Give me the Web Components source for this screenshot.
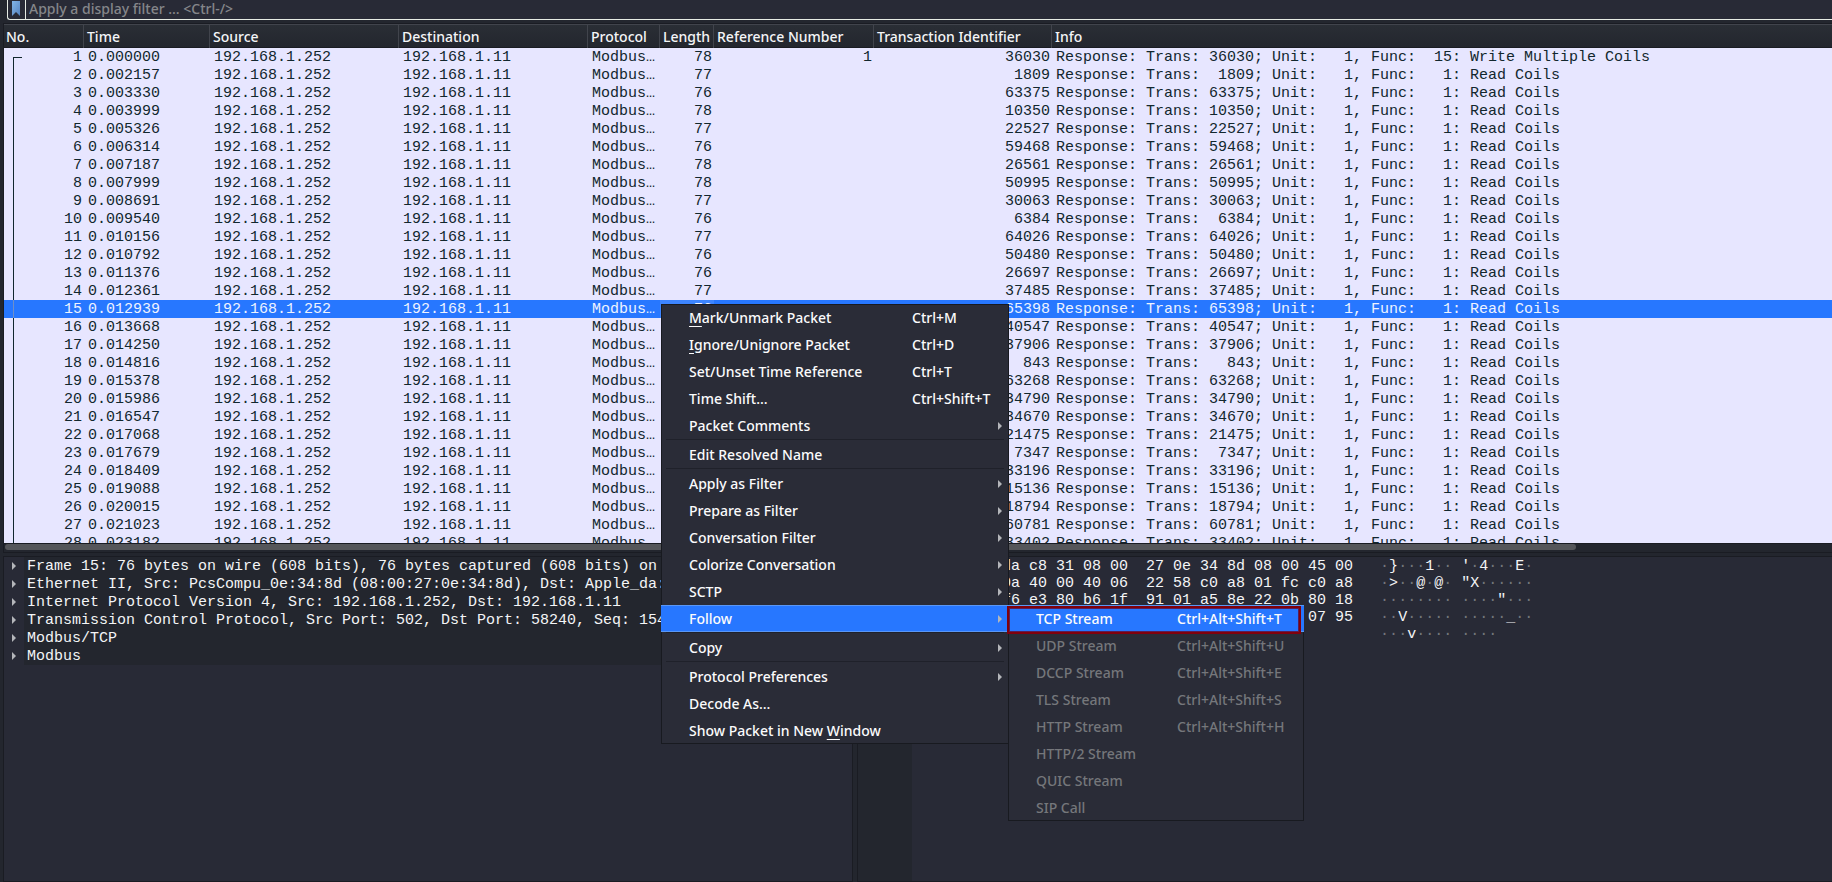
<!DOCTYPE html>
<html lang="en">
<head>
<meta charset="utf-8">
<title>Packet capture</title>
<style>
  html, body { margin: 0; height: 100%; }
  body {
    background: #23262e;
    color: #f4f5f7;
    font: 500 14px/18px "Noto Sans", sans-serif;
    overflow: hidden;
    --mono: 15px/16px "Liberation Mono", monospace;
    --panel: #282a36;
    --shade: #23262e;
    --line: #1a1c23;
    --accent: #2777ff;
  }
</style>
</head>
<body>
<capture-window></capture-window>

<script>
const PACKETS = [
  ['0.000000', 78, 36030, 15, 'Write Multiple Coils', 1],
  ['0.002157', 77, 1809], ['0.003330', 76, 63375], ['0.003999', 78, 10350],
  ['0.005326', 77, 22527], ['0.006314', 76, 59468], ['0.007187', 78, 26561],
  ['0.007999', 78, 50995], ['0.008691', 77, 30063], ['0.009540', 76, 6384],
  ['0.010156', 77, 64026], ['0.010792', 76, 50480], ['0.011376', 76, 26697],
  ['0.012361', 77, 37485], ['0.012939', 76, 65398], ['0.013668', 76, 40547],
  ['0.014250', 76, 37906], ['0.014816', 76, 843], ['0.015378', 76, 63268],
  ['0.015986', 76, 34790], ['0.016547', 76, 34670], ['0.017068', 76, 21475],
  ['0.017679', 76, 7347], ['0.018409', 76, 33196], ['0.019088', 76, 15136],
  ['0.020015', 76, 18794], ['0.021023', 76, 60781], ['0.023182', 76, 33402]
];
const SELECTED = 15;

function define(name, html, setup) {
  const template = document.createElement('template');
  template.innerHTML = html;
  customElements.define(name, class extends HTMLElement {
    constructor() {
      super();
      this.attachShadow({ mode: 'open' }).append(template.content.cloneNode(true));
    }
    connectedCallback() {
      if (setup && !this.ready) { this.ready = true; setup(this, this.shadowRoot); }
    }
  });
}

define('filter-bar', `
  <style>
    :host { display: block; padding-left: 7px; background: var(--shade); }
    .field { display: flex; height: 19px; border: solid #e6ebe4; border-width: 0 0 1px 1px; border-bottom-left-radius: 3px; background: var(--panel); overflow: hidden; }
    button { width: 18px; padding: 0 0 0 4px; border: 0; border-right: 1px solid #e6ebe4; background: none; text-align: left; }
    svg { display: block; margin-bottom: 3px; }
    input { flex: 1; min-width: 0; padding: 0 3px 2px; border: 0; outline: 0; background: none; color: inherit; font: inherit; }
    input::placeholder { color: #85868a; opacity: 1; }
  </style>
  <div class="field">
    <button type="button" aria-label="Filter bookmarks">
      <svg width="9" height="15" viewBox="0 0 9 15"><defs><linearGradient id="g" x2="1" y2="1"><stop stop-color="#82b4e6"/><stop offset="1" stop-color="#5583c0"/></linearGradient></defs><path d="M0 0h8v15L4 11 0 15z" fill="url(#g)"/></svg>
    </button>
    <input type="text" aria-label="Display filter" placeholder="Apply a display filter … &lt;Ctrl-/&gt;">
  </div>`);

define('packet-list', `
  <style>
    :host { display: flex; flex-direction: column; min-height: 0; overflow: hidden; background: var(--shade); border: solid var(--line); border-width: 1px 0 1px 1px; }
    .view { flex: 1; min-height: 0; overflow: hidden; background: #e7e6ff; border-bottom: 1px solid var(--line); }
    table { width: 100%; table-layout: fixed; border-collapse: separate; border-spacing: 0; }
    th { height: 23px; box-sizing: content-box; padding: 0 0 0 3px; border: solid #41444c; border-width: 1px 1px 0 0; background: linear-gradient(#2a2e35, #23262e); box-shadow: inset 0 -1px var(--line); font-weight: inherit; text-align: left; line-height: 23px; white-space: nowrap; }
    th:first-child { padding-left: 2px; }
    th:last-child { border-right: 0; }
    td { height: 16px; padding: 2px 2px 0 4px; font: var(--mono); color: #12272e; white-space: pre; overflow: hidden; }
    .n { text-align: right; }
    td:first-child { background: linear-gradient(#12272e, #12272e) 9px 0 / 1px 100% no-repeat; }
    tr:first-child td:first-child { background: linear-gradient(#12272e, #12272e) 9px 9px / 1px 100% no-repeat, linear-gradient(#12272e, #12272e) 9px 9px / 9px 1px no-repeat; }
    .selected { background: var(--accent); }
    .selected td { color: #eef3ff; }
    .selected td:first-child { background: linear-gradient(#6f8fc8, #6f8fc8) 9px 0 / 1px 100% no-repeat; }
    .selected td:nth-child(6) { background: #3d85ff; }
    .bar { height: 8px; box-sizing: border-box; padding: 0 0 1px 1px; }
    .thumb { width: 86%; height: 6px; border-radius: 3px; background: #55565a; }
  </style>
  <div class="view"><table>
    <colgroup><col style="width:80px"><col style="width:126px"><col style="width:189px"><col style="width:189px"><col style="width:72px"><col style="width:54px"><col style="width:160px"><col style="width:178px"><col></colgroup>
    <thead><tr><th>No.</th><th>Time</th><th>Source</th><th>Destination</th><th>Protocol</th><th>Length</th><th>Reference Number</th><th>Transaction Identifier</th><th>Info</th></tr></thead>
    <tbody></tbody>
  </table></div>
  <div class="bar"><div class="thumb"></div></div>`,
  (host, root) => {
    const body = root.querySelector('tbody');
    PACKETS.forEach(([time, length, trans, func = 1, name = 'Read Coils', ref = ''], i) => {
      const row = body.insertRow();
      if (i + 1 === SELECTED) row.className = 'selected';
      const info = `Response: Trans: ${String(trans).padStart(5)}; Unit:   1, Func: ${String(func).padStart(3)}: ${name}`;
      [i + 1, time, '192.168.1.252', '192.168.1.11', 'Modbus…', length, ref, trans, info].forEach((value, column) => {
        const cell = row.insertCell();
        cell.textContent = value;
        if ([0, 5, 6, 7].includes(column)) cell.className = 'n';
      });
    });
  });

define('protocol-node', `
  <style>
    :host { display: block; }
    button { display: grid; grid-template-columns: 20px 1fr; align-items: center; width: 100%; height: 18px; padding: 0; border: 0; background: none; color: #f4f5f7; font: var(--mono); text-align: left; white-space: pre; }
    svg { display: block; margin-left: 8px; }
    span { padding: 2px 0 0 3px; background: var(--shade); overflow: hidden; }
  </style>
  <button type="button" aria-expanded="false">
    <svg width="5" height="8" viewBox="0 0 5 8"><path d="M0 0L4 4 0 8z" fill="#b4b6ba"/></svg><span><slot></slot></span>
  </button>`);

define('packet-details', `
  <style>
    :host { display: block; min-width: 0; overflow: hidden; background: var(--panel); border: solid var(--line); border-width: 1px 1px 1px 0; }
  </style>
  <slot></slot>`);

define('packet-bytes', `
  <style>
    :host { display: flex; min-width: 0; overflow: hidden; background: var(--panel); border: solid var(--line); border-width: 1px 0; }
    pre { margin: 0; padding-top: 1px; font: 15px/17px "Liberation Mono", monospace; }
    .offset { padding: 1px 9px 0; background: var(--shade); color: #85868a; }
    .hex { padding-left: 9px; }
    .text { padding-left: 27px; }
    i { font-style: normal; color: #73757c; }
  </style>
  <pre class="offset"></pre><pre class="hex"></pre><pre class="text"></pre>`,
  (host, root) => {
    const rows = host.getAttribute('bytes').split('|').map(r => r.trim().split(' '));
    const group = list => [list.slice(0, 8), list.slice(8)];
    root.querySelector('.offset').textContent = rows.map((_, i) => (i * 16).toString(16).padStart(4, '0')).join('\n');
    root.querySelector('.hex').textContent = rows.map(r => group(r).map(g => g.join(' ')).join('  ')).join('\n');
    const glyph = b => {
      const c = parseInt(b, 16);
      return c > 32 && c < 127 ? String.fromCharCode(c).replace('<', '&lt;').replace('>', '&gt;') : '<i>·</i>';
    };
    root.querySelector('.text').innerHTML = rows.map(r => group(r).map(g => g.map(glyph).join('')).join(' ')).join('\n');
  });

define('context-menu', `
  <style>
    :host { display: block; background: #2a2c37; box-shadow: inset 0 0 0 1px #181a20; }
  </style>
  <div role="menu"><slot></slot></div>`);

define('menu-rule', `
  <style>:host { display: block; height: 1px; margin: 0 5px; border-top: 1px solid #1f212a; }</style>`);

define('menu-entry', `
  <style>
    :host { display: block; position: relative; }
    button { display: flex; align-items: center; width: 100%; height: 27px; padding: 0 6px 0 28px; border: 0; background: none; color: #fbfbfc; font: inherit; text-align: left; white-space: nowrap; }
    .label { flex: 1; }
    .key { width: var(--key-width, 90px); }
    ::slotted(u) { text-underline-offset: 3px; text-decoration-thickness: 1px; }
    svg { display: none; }
    :host([parent]) svg { display: block; }
    :host([parent]) .key { display: none; }
    :host([active]) button { background: var(--accent); box-shadow: inset 0 1px #5a97f5, inset 0 -1px #5a97f5; }
    :host([disabled]) button { color: #75777b; }
    :host([marked])::after { content: ""; position: absolute; left: -1px; top: 1px; width: calc(100% - 2px); height: 28px; box-sizing: border-box; border: 2px solid #80000c; box-shadow: inset 0 0 0 1px #5a1f55; }
    ::slotted([slot=submenu]) { position: absolute; top: 0; left: calc(100% - 1px); width: 296px; --key-width: 121px; }
  </style>
  <button type="button" role="menuitem">
    <span class="label"><slot></slot></span><span class="key"></span>
    <svg width="5" height="8" viewBox="0 0 5 8"><path d="M0 0L4 4 0 8z" fill="#b4b6ba"/></svg>
  </button>
  <slot name="submenu"></slot>`,
  (host, root) => {
    root.querySelector('.key').textContent = host.getAttribute('key') || '';
    if (host.hasAttribute('disabled')) root.querySelector('button').disabled = true;
    if (host.hasAttribute('parent')) root.querySelector('button').setAttribute('aria-haspopup', 'menu');
  });

define('capture-window', `
  <style>
    :host { display: grid; grid-template-rows: 20px minmax(0, 529fr) minmax(0, 326fr); row-gap: 3px; height: 100vh; position: relative; }
    packet-list, .panes { margin-left: 3px; }
    .panes { display: grid; grid-template-columns: minmax(0, 850fr) minmax(0, 975fr); column-gap: 4px; }
    packet-details { border-left: 1px solid var(--line); }
    packet-bytes { border-left: 1px solid var(--line); }
    .popup { position: absolute; left: 661px; top: 304px; width: 348px; --key-width: 91px; }
  </style>
  <filter-bar></filter-bar>
  <packet-list></packet-list>
  <div class="panes">
    <packet-details>
      <protocol-node>Frame 15: 76 bytes on wire (608 bits), 76 bytes captured (608 bits) on</protocol-node>
      <protocol-node>Ethernet II, Src: PcsCompu_0e:34:8d (08:00:27:0e:34:8d), Dst: Apple_da:</protocol-node>
      <protocol-node>Internet Protocol Version 4, Src: 192.168.1.252, Dst: 192.168.1.11</protocol-node>
      <protocol-node>Transmission Control Protocol, Src Port: 502, Dst Port: 58240, Seq: 154</protocol-node>
      <protocol-node>Modbus/TCP</protocol-node>
      <protocol-node>Modbus</protocol-node>
    </packet-details>
    <packet-bytes bytes="14 7d da da c8 31 08 00 27 0e 34 8d 08 00 45 00|00 3e 9a 0a 40 00 40 06 22 58 c0 a8 01 fc c0 a8|01 0b 01 f6 e3 80 b6 1f 91 01 a5 8e 22 0b 80 18|01 fd 56 c9 00 00 01 01 08 0a d4 1e b2 5f 07 95|d1 c3 ff 76 00 00 00 04 01 01 01 00"></packet-bytes>
  </div>
  <context-menu class="popup">
    <menu-entry key="Ctrl+M"><u>M</u>ark/Unmark Packet</menu-entry>
    <menu-entry key="Ctrl+D"><u>I</u>gnore/Unignore Packet</menu-entry>
    <menu-entry key="Ctrl+T">Set/Unset Time Reference</menu-entry>
    <menu-entry key="Ctrl+Shift+T">Time Shift…</menu-entry>
    <menu-entry parent>Packet Comments</menu-entry>
    <menu-rule></menu-rule>
    <menu-entry>Edit Resolved Name</menu-entry>
    <menu-rule></menu-rule>
    <menu-entry parent>Apply as Filter</menu-entry>
    <menu-entry parent>Prepare as Filter</menu-entry>
    <menu-entry parent>Conversation Filter</menu-entry>
    <menu-entry parent>Colorize Conversation</menu-entry>
    <menu-entry parent>SCTP</menu-entry>
    <menu-entry parent active>Follow
      <context-menu slot="submenu">
        <menu-entry key="Ctrl+Alt+Shift+T" active marked>TCP Stream</menu-entry>
        <menu-entry key="Ctrl+Alt+Shift+U" disabled>UDP Stream</menu-entry>
        <menu-entry key="Ctrl+Alt+Shift+E" disabled>DCCP Stream</menu-entry>
        <menu-entry key="Ctrl+Alt+Shift+S" disabled>TLS Stream</menu-entry>
        <menu-entry key="Ctrl+Alt+Shift+H" disabled>HTTP Stream</menu-entry>
        <menu-entry disabled>HTTP/2 Stream</menu-entry>
        <menu-entry disabled>QUIC Stream</menu-entry>
        <menu-entry disabled>SIP Call</menu-entry>
      </context-menu>
    </menu-entry>
    <menu-rule></menu-rule>
    <menu-entry parent>Copy</menu-entry>
    <menu-rule></menu-rule>
    <menu-entry parent>Protocol Preferences</menu-entry>
    <menu-entry>Decode As…</menu-entry>
    <menu-entry>Show Packet in New <u>W</u>indow</menu-entry>
  </context-menu>`);
</script>
</body>
</html>
